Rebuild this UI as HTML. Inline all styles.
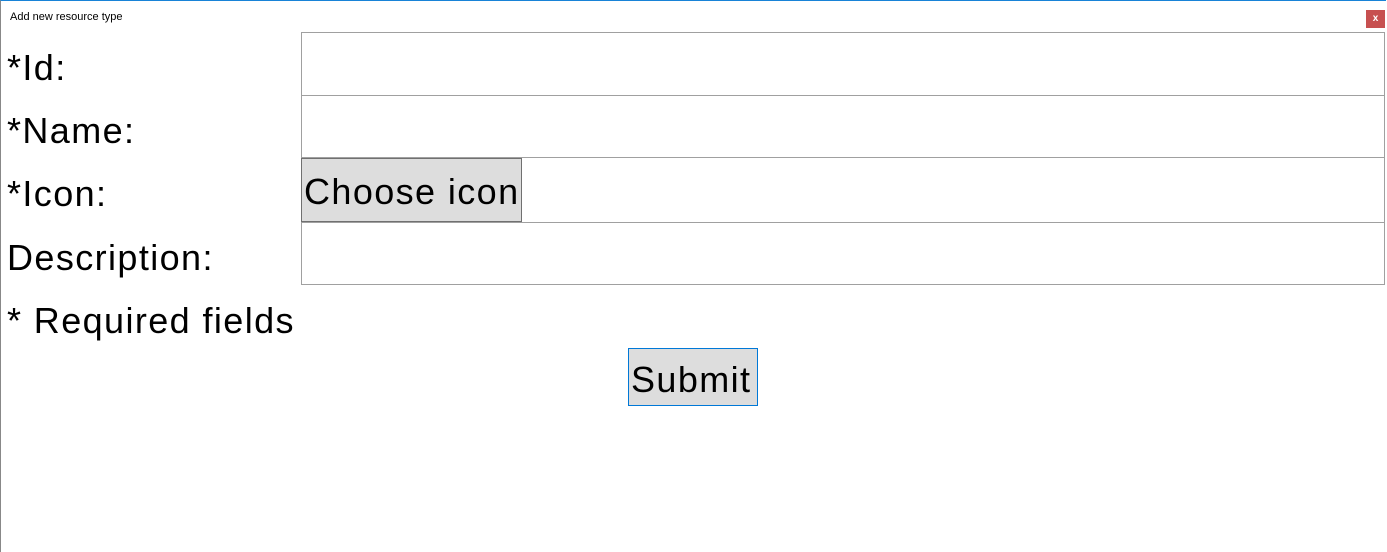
<!DOCTYPE html>
<html><head><meta charset="utf-8"><style>
html,body{margin:0;padding:0;width:1387px;height:552px;overflow:hidden;background:#fff;font-family:"Liberation Sans",sans-serif;}
.win{position:absolute;left:0;top:0;width:1386px;height:552px;border-top:1px solid #1883d7;border-left:1px solid #888;box-sizing:border-box;}
.title{position:absolute;left:9px;top:10px;font-size:11px;color:#000;}
.close{position:absolute;left:1365px;top:9px;width:19px;height:18px;background:#c75050;color:#fff;font-size:10px;font-weight:bold;text-align:center;line-height:17px;}
.lbl{position:absolute;left:7px;font-size:36px;letter-spacing:1.4px;color:#000;line-height:40px;}
.inp{position:absolute;left:301px;width:1084px;border:1px solid #a0a0a0;box-sizing:border-box;background:#fff;}
.btn{position:absolute;background:#dddddd;box-sizing:border-box;font-size:36px;letter-spacing:1.4px;color:#000;white-space:nowrap;}
</style></head><body>
<div class="win">
<div class="title">Add new resource type</div>
<div class="close">x</div>
</div>
<div class="inp" style="top:32px;height:64px"></div>
<div class="inp" style="top:95px;height:63px"></div>
<div class="inp" style="top:157px;height:66px"></div>
<div class="inp" style="top:222px;height:63px"></div>
<div class="btn" style="left:301px;top:158px;width:221px;height:64px;border:1px solid #707070;line-height:66px;padding-left:2px;">Choose icon</div>
<div class="lbl" style="top:48px">*Id:</div>
<div class="lbl" style="top:111px">*Name:</div>
<div class="lbl" style="top:174px">*Icon:</div>
<div class="lbl" style="top:238px">Description:</div>
<div class="lbl" style="top:301px">* Required fields</div>
<div class="btn" style="left:628px;top:348px;width:130px;height:58px;border:1px solid #0078d7;line-height:62px;padding-left:2px;">Submit</div>
</body></html>
